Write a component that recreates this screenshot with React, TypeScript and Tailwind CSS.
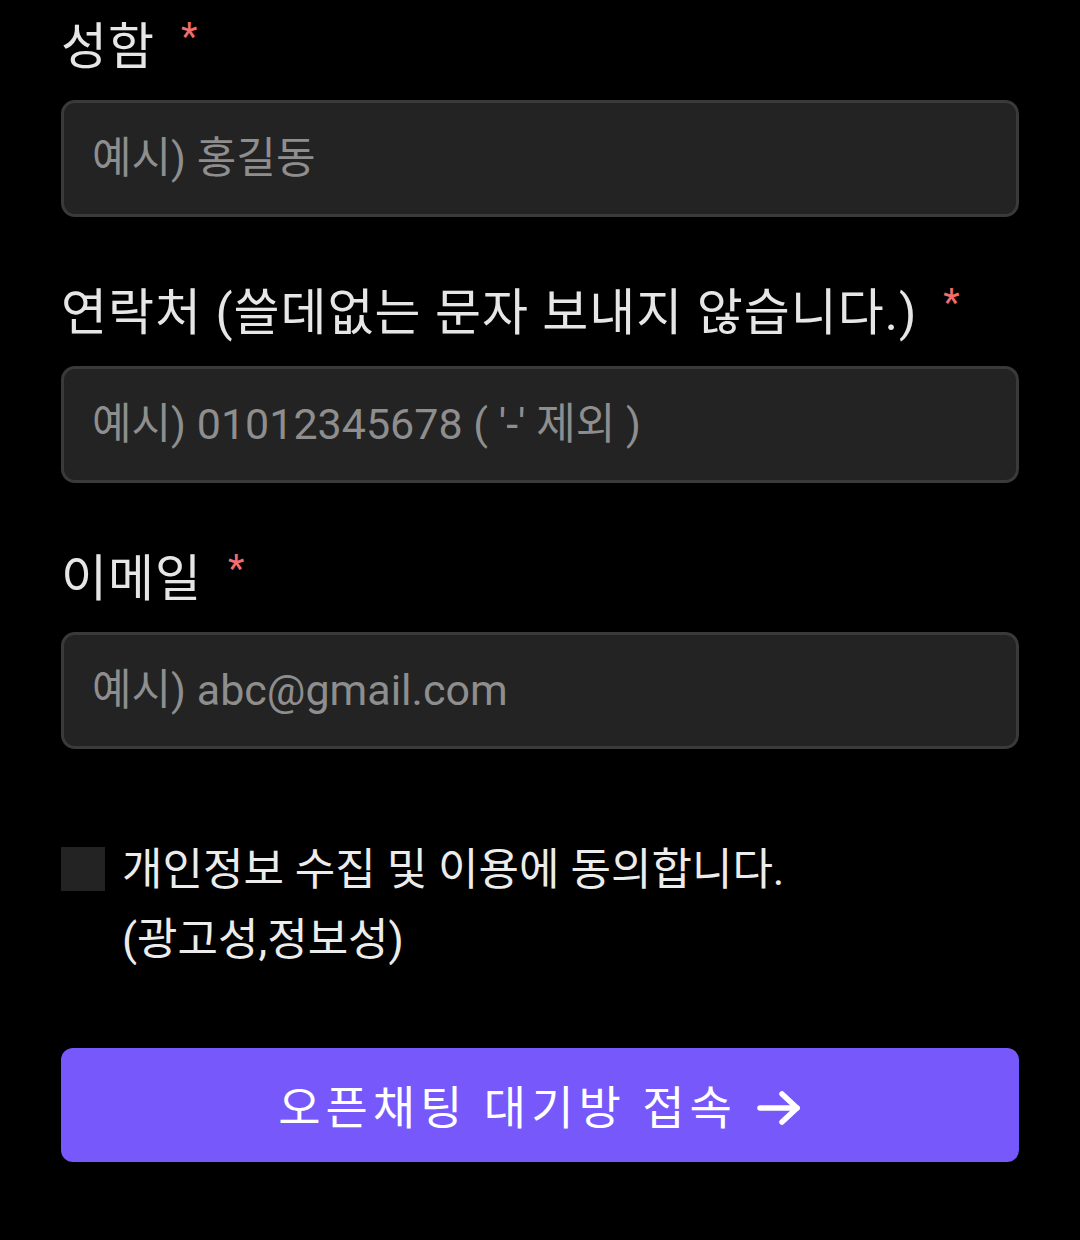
const font = { fontFamily: "Roboto, 'Noto Sans CJK KR', sans-serif" }

function Field({ label, placeholder }: { label: string; placeholder: string }) {
  return (
    <div className="flex flex-col">
      <div className="flex items-start h-[84px] text-[50px] leading-[84px] tracking-[1px] text-[#e6e6e6]">
        <span>{label}</span>
        <span className="ml-[26px] text-[38px] leading-[64px] text-[#f26d6d]">*</span>
      </div>
      <div className="mt-[11px] h-[117px] rounded-[14px] border-[3px] border-[#3a3a3a] bg-[#232323] flex items-center px-[28px]">
        <input
          className="w-full bg-transparent outline-none text-[43px] text-white placeholder:text-[#8e8e8e]"
          placeholder={placeholder}
          style={font}
        />
      </div>
    </div>
  )
}

export default function App() {
  return (
    <div className="min-h-screen bg-black px-[61px] pt-[5px]" style={font}>
      <div className="flex flex-col gap-[54px] w-[958px]">
        <Field label="성함" placeholder="예시) 홍길동" />
        <Field label="연락처 (쓸데없는 문자 보내지 않습니다.)" placeholder="예시) 01012345678 ( '-' 제외 )" />
        <Field label="이메일" placeholder="예시) abc@gmail.com" />
      </div>

      <div className="mt-[86px] flex items-start gap-[17px]">
        <div className="w-[44px] h-[44px] mt-[12px] bg-[#232323] shrink-0" />
        <p className="text-[44px] leading-[70px] text-[#ececec]">
          개인정보 수집 및 이용에 동의합니다.
          <br />
          (광고성,정보성)
        </p>
      </div>

      <button className="mt-[73px] w-[958px] h-[114px] rounded-[12px] bg-[#7758fb] flex items-center justify-center gap-[19px] pt-[6px] text-white text-[46px]">
        <span className="tracking-[5px]">오픈채팅 대기방 접속</span>
        <svg width="46" height="36" viewBox="0 0 46 36" fill="none" stroke="white" strokeWidth="5.5" strokeLinecap="round" strokeLinejoin="round">
          <path d="M4 18h37" />
          <path d="M26 4l15 14-15 14" />
        </svg>
      </button>
    </div>
  )
}
